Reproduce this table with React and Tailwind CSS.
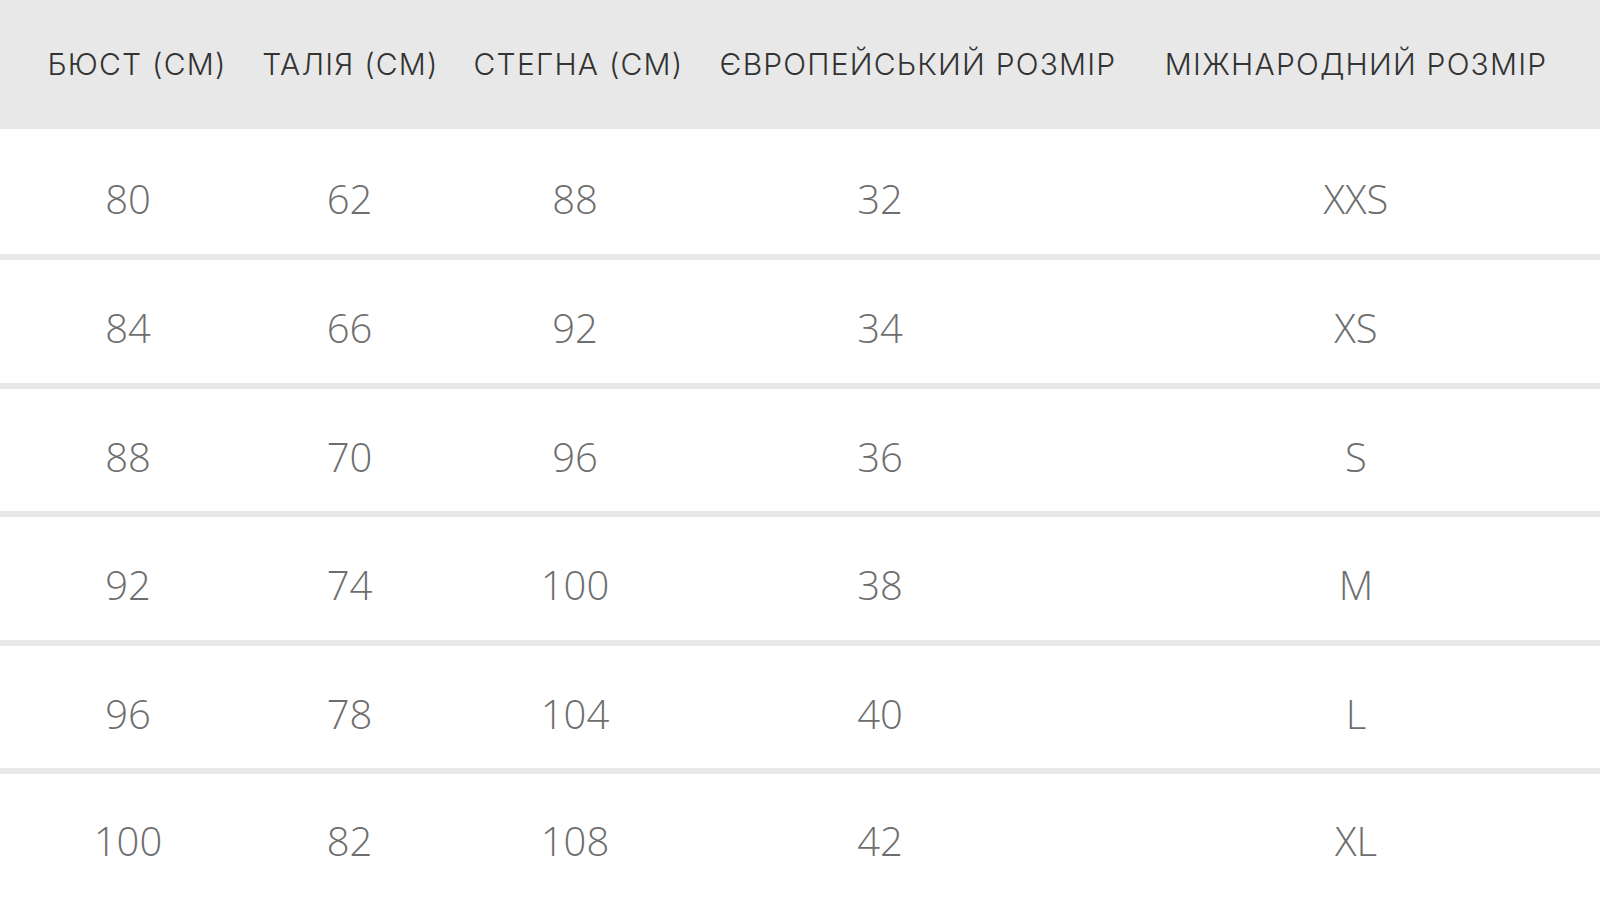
const headers = [
  { label: 'БЮСТ (СМ)', w: 'w-[200px]', ml: 'ml-[37px]' },
  { label: 'ТАЛІЯ (СМ)', w: 'w-[200px]', ml: 'ml-[13.5px]' },
  { label: 'СТЕГНА (СМ)', w: 'w-[220px]', ml: 'ml-[18px]' },
  { label: 'ЄВРОПЕЙСЬКИЙ РОЗМІР', w: 'w-[420px]', ml: 'ml-[19.5px]' },
  { label: 'МІЖНАРОДНИЙ РОЗМІР', w: 'w-[400px]', ml: 'ml-[28px]' },
];

// body columns are not centred under the headings in the original
const cols = ['ml-[28px]', 'ml-[21.5px]', 'ml-[25.5px]', 'ml-[105px]', 'ml-[276px]'];

const rows = [
  ['80', '62', '88', '32', 'XXS'],
  ['84', '66', '92', '34', 'XS'],
  ['88', '70', '96', '36', 'S'],
  ['92', '74', '100', '38', 'M'],
  ['96', '78', '104', '40', 'L'],
  ['100', '82', '108', '42', 'XL'],
];

const App = () => {
  return (
    <div className="w-[1600px] h-[900px] overflow-hidden bg-white font-['Open_Sans',sans-serif]">
      {/* Header */}
      <div className="h-[129px] bg-[#e8e8e8] flex items-center">
        {headers.map((h) => (
          <div
            key={h.label}
            className={`${h.w} ${h.ml} shrink-0 text-center whitespace-nowrap font-['Inter',sans-serif] font-light text-[30px] tracking-[1.2px] text-[#333333]`}
          >
            {h.label}
          </div>
        ))}
      </div>

      {/* Rows */}
      {rows.map((row, i) => {
        const last = i === rows.length - 1;
        return (
          <div
            key={i}
            className={`${i === 0 ? 'h-[131px] pt-[14px]' : last ? 'h-[126px] pt-[8px]' : 'h-[128.5px] pt-[14px]'} ${
              last ? '' : 'border-b-[6px] border-[#e8e8e8]'
            } flex items-center`}
          >
            {row.map((cell, j) => (
              <div key={j} className={`${cols[j]} w-[200px] shrink-0 text-center text-[40px] font-light text-[#6e6e6e]`}>
                {cell}
              </div>
            ))}
          </div>
        );
      })}
    </div>
  );
};

export default App;
